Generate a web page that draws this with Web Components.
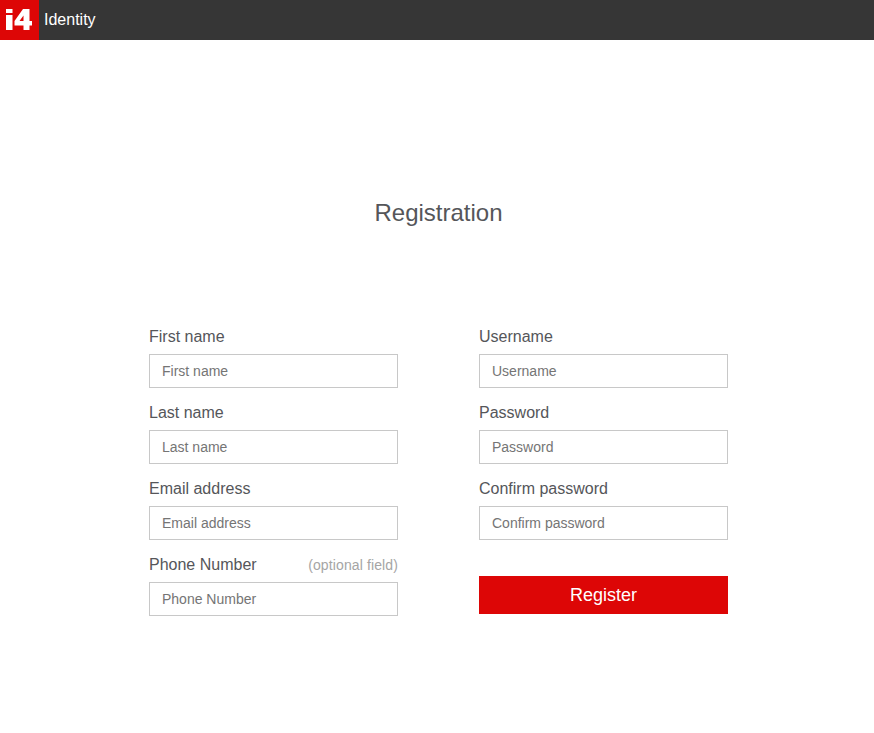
<!DOCTYPE html>
<html>
<head>
<meta charset="utf-8">
<title>Registration</title>
<style>
  html, body { margin: 0; background: #fff; }
  body { font-family: "Liberation Sans", Arial, sans-serif; color: #55565a; }
</style>
</head>
<body>
<app-header>Identity</app-header>
<page-title>Registration</page-title>
<register-form>
  <form-field slot="left" label="First name"></form-field>
  <form-field slot="left" label="Last name"></form-field>
  <form-field slot="left" label="Email address"></form-field>
  <form-field slot="left" label="Phone Number" hint="(optional field)"></form-field>
  <form-field slot="right" label="Username"></form-field>
  <form-field slot="right" label="Password" type="password"></form-field>
  <form-field slot="right" label="Confirm password" type="password"></form-field>
  <red-button slot="right">Register</red-button>
</register-form>

<script>
const define = (name, html, init) => {
  customElements.define(name, class extends HTMLElement {
    constructor() {
      super();
      this.attachShadow({ mode: 'open' }).innerHTML = html;
    }
    connectedCallback() {
      init && init(this, this.shadowRoot);
    }
  });
};

define('app-header', `
  <style>
    :host { display: flex; align-items: center; height: 40px; background: #363636; color: #fff; font-size: 16px; }
    svg { display: block; width: 39px; height: 40px; }
    span { margin-left: 5px; }
  </style>
  <svg viewBox="0 0 39 40">
    <rect width="39" height="40" fill="#dd0606"/>
    <path fill="#fff" fill-rule="evenodd" d="M6 9h6.5v4H6zM6 15h6.5v15H6zM23 9h6.5v12H32v4.5h-2.5V30h-6v-4.5h-9V21zM23.5 15.5L19.5 21h4z"/>
  </svg>
  <span><slot></slot></span>
`);

define('page-title', `
  <style>
    :host { display: block; height: 124px; padding: 159px 0 0 3px; text-align: center; font-size: 24px; line-height: 28px; color: #55565a; }
  </style>
  <slot></slot>
`);

define('register-form', `
  <style>
    :host { display: flex; gap: 81px; padding-left: 149px; }
    .col { display: flex; flex-direction: column; gap: 11px; width: 249px; }
  </style>
  <div class="col"><slot name="left"></slot></div>
  <div class="col"><slot name="right"></slot></div>
`);

define('form-field', `
  <style>
    :host { display: block; }
    .top { display: flex; justify-content: space-between; align-items: center; height: 28px; margin-bottom: 3px; font-size: 16px; color: #55565a; }
    .hint { font-size: 14px; letter-spacing: .12px; color: #a5a5a5; }
    input { display: block; box-sizing: border-box; width: 100%; height: 34px; padding: 0 12px; border: 1px solid #c8c8c8; border-radius: 0; background: #fff; outline: 0; font: 14px "Liberation Sans", Arial, sans-serif; color: #55565a; }
    input::placeholder { color: #757575; opacity: 1; }
  </style>
  <div class="top"><span class="label"></span><span class="hint"></span></div>
  <input>
`, (host, root) => {
  const label = host.getAttribute('label');
  root.querySelector('.label').textContent = label;
  root.querySelector('.hint').textContent = host.getAttribute('hint') || '';
  const input = root.querySelector('input');
  input.placeholder = label;
  input.type = host.getAttribute('type') || 'text';
});

define('red-button', `
  <style>
    :host { display: block; margin-top: 25px; }
    button { display: block; width: 100%; height: 38px; border: 0; padding: 0; background: #dd0606; color: #fff; font: 18px "Liberation Sans", Arial, sans-serif; }
  </style>
  <button><slot></slot></button>
`);
</script>
</body>
</html>
